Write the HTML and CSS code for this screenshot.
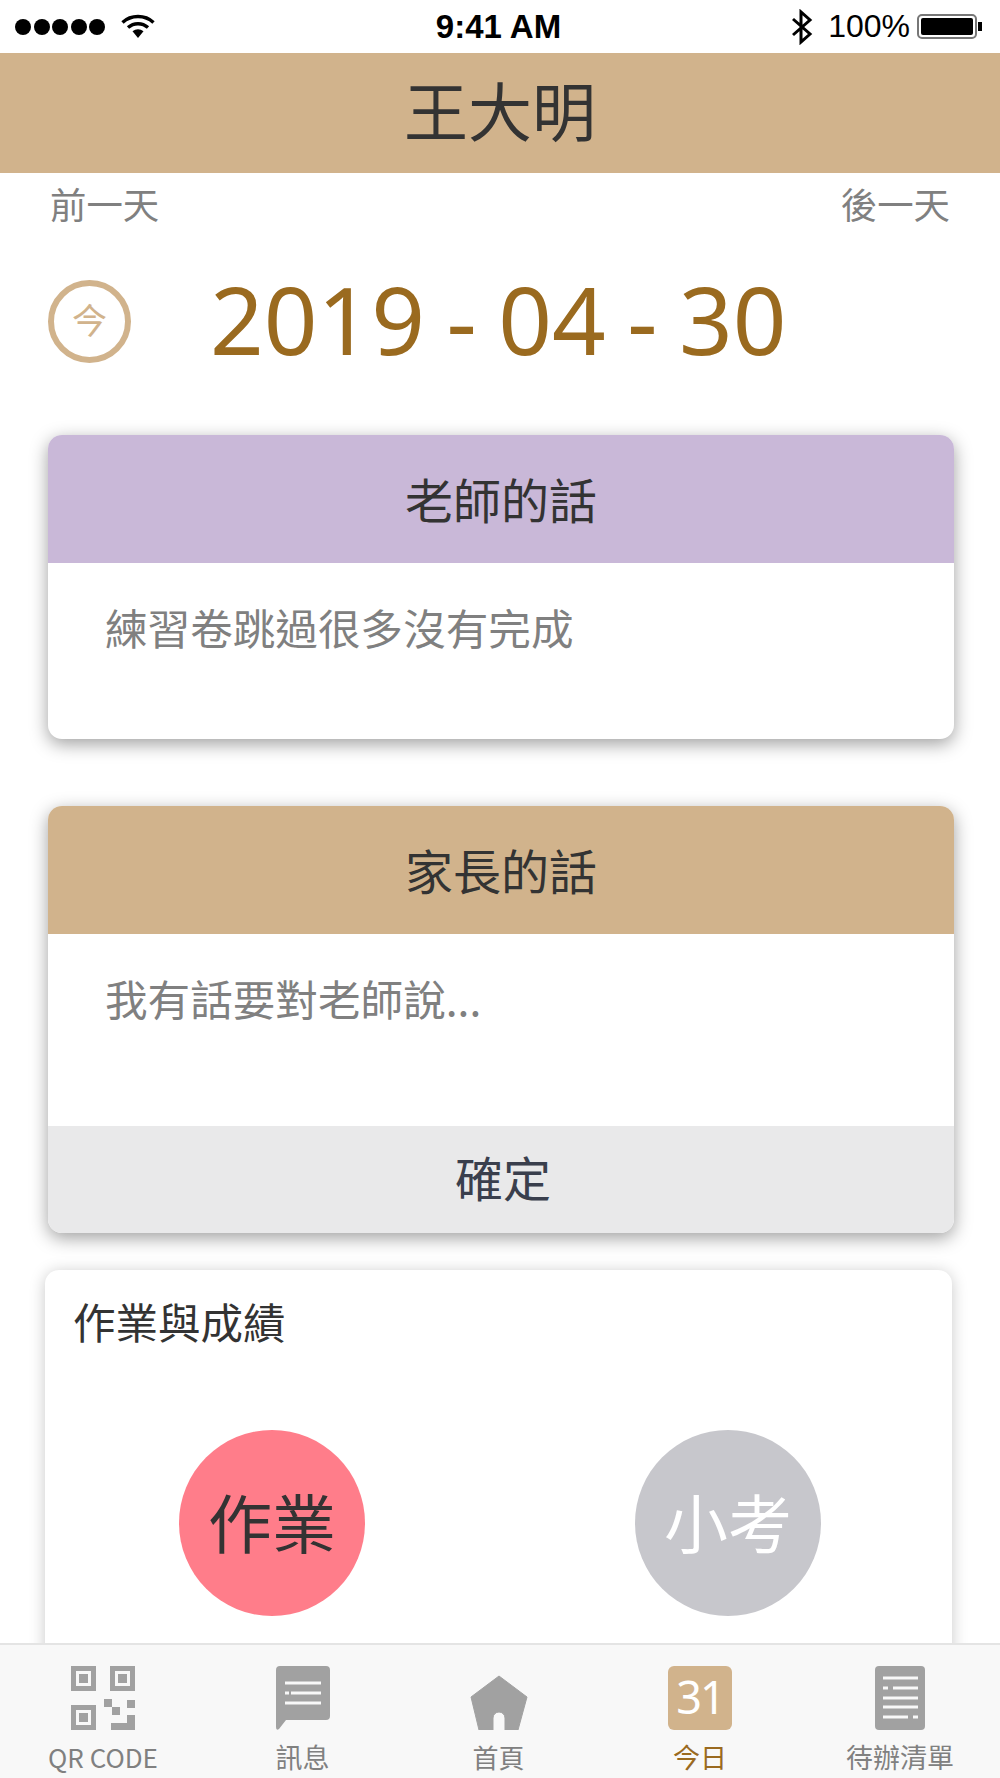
FILE: index.html
```html
<!DOCTYPE html>
<html lang="zh-Hant">
<head>
<meta charset="utf-8">
<title>王大明</title>
<link rel="stylesheet" href="styles.css">
</head>
<body>
<div class="phone">
	<!-- status bar -->
	<div class="statusbar">
		<div class="status-left">
			<span class="dots"><i></i><i></i><i></i><i></i><i></i></span>
			<svg class="wifi" width="34" height="26" viewBox="0 0 34 26">
				<path d="M1.5 8.5C10 0.5 24 0.5 32.5 8.5" fill="none" stroke="#000" stroke-width="3.4"/>
				<path d="M7 13.5C12.8 8.4 21.2 8.4 27 13.5" fill="none" stroke="#000" stroke-width="3.4"/>
				<path d="M11.5 17.3C14.8 14.6 19.2 14.6 22.5 17.3L17 24Z" fill="#000"/>
			</svg>
		</div>
		<div class="status-time">9:41 AM</div>
		<div class="status-right">
			<svg width="22" height="36" viewBox="0 0 22 36">
				<path d="M2 10L19 25L10 33V3L19 11L2 26" fill="none" stroke="#000" stroke-width="3"/>
			</svg>
			<span class="percent">100%</span>
			<span class="battery"><span class="battery-fill"></span></span>
			<span class="battery-tip"></span>
		</div>
	</div>

	<div class="header">王大明</div>

	<div class="content">
		<div class="daynav">
			<span>前一天</span>
			<span>後一天</span>
		</div>
		<div class="daterow">
			<span class="today-btn">今</span>
			<span class="date">2019 - 04 - 30</span>
		</div>

		<div class="card">
			<div class="card-title purple">老師的話</div>
			<div class="card-body teacher">練習卷跳過很多沒有完成</div>
		</div>

		<div class="card parent-card">
			<div class="card-title tan">家長的話</div>
			<div class="card-body parent">我有話要對老師說...</div>
			<div class="confirm">確定</div>
		</div>

		<div class="scores">
			<div class="scores-title">作業與成績</div>
			<div class="circles">
				<div class="circle pink">作業</div>
				<div class="circle grey">小考</div>
			</div>
		</div>
	</div>

	<!-- bottom tabs -->
	<div class="tabbar">
		<div class="tab tab-qr">
			<svg width="64" height="64" viewBox="0 0 64 64" fill="#a1a1a1">
				<path fill-rule="evenodd" d="M0 0H25V25H0ZM5 5V20H20V5Z"/>
				<rect x="8" y="8" width="9" height="9"/>
				<path fill-rule="evenodd" d="M39 0H64V25H39ZM44 5V20H59V5Z"/>
				<rect x="47" y="8" width="9" height="9"/>
				<path fill-rule="evenodd" d="M0 39H25V64H0ZM5 44V59H20V44Z"/>
				<rect x="8" y="47" width="9" height="9"/>
				<rect x="33" y="33" width="8" height="8"/>
				<rect x="41" y="41" width="8" height="8"/>
				<rect x="56" y="34" width="8" height="8"/>
				<path d="M40 57H56V49H64V64H40Z"/>
			</svg>
			<span>QR CODE</span>
		</div>
		<div class="tab tab-msg">
			<svg width="54" height="64" viewBox="0 0 54 64">
				<path d="M4 0H50A4 4 0 0 1 54 4V50A4 4 0 0 1 50 54H10L3 63Q0 65 0 61V4A4 4 0 0 1 4 0Z" fill="#a1a1a1"/>
				<path d="M9 17H45M15 27H45M9 37H45" stroke="#f8f8f8" stroke-width="3" fill="none"/>
				<path d="M9 27H13" stroke="#f8f8f8" stroke-width="3" fill="none"/>
			</svg>
			<span>訊息</span>
		</div>
		<div class="tab tab-home">
			<svg width="58" height="64" viewBox="0 0 58 64">
				<path d="M29 10L57 31L48 64H35V52A6 6 0 0 0 23 52V64H9L1 31Z" fill="#a1a1a1" stroke="#a1a1a1" stroke-width="1" stroke-linejoin="round"/>
			</svg>
			<span>首頁</span>
		</div>
		<div class="tab active">
			<div class="cal">31</div>
			<span>今日</span>
		</div>
		<div class="tab">
			<svg width="50" height="64" viewBox="0 0 50 64">
				<rect width="50" height="64" rx="4" fill="#a1a1a1"/>
				<path d="M8 12H43M18 22H43M8 32H43M8 41H43M8 51H33M38 51H43M8 22H13" stroke="#f8f8f8" stroke-width="3" fill="none"/>
			</svg>
			<span>待辦清單</span>
		</div>
	</div>
</div>
</body>
</html>
```

FILE: styles.css
```css
* {
  box-sizing: border-box;
}

html, body {
  margin: 0;
  padding: 0;
  background: white;
}

body {
  font-family: "Noto Sans CJK TC", "Noto Sans", sans-serif;
}

.phone {
  width: 1000px;
  height: 1778px;
  display: flex;
  flex-direction: column;
  overflow: hidden;
}

/* Status bar */
.statusbar {
  height: 53px;
  flex: none;
  display: grid;
  grid-template-columns: 1fr auto 1fr;
  align-items: center;
  padding: 0 18px 0 15px;
  color: black;
  font-family: "Liberation Sans", sans-serif;
}

.status-left {
  display: flex;
  align-items: center;
  gap: 16px;
}

.dots {
  display: flex;
  gap: 2.5px;
}

.dots i {
  width: 16px;
  height: 16px;
  border-radius: 50%;
  background: black;
}

.status-time {
  font-size: 33px;
  font-weight: bold;
}

.status-right {
  display: flex;
  align-items: center;
  justify-content: flex-end;
}

.percent {
  font-size: 32px;
  margin: 0 7px 0 15px;
}

.battery {
  width: 60px;
  height: 25px;
  border: 2px solid #777;
  border-radius: 5px;
  padding: 2px;
}

.battery-fill {
  display: block;
  height: 100%;
  background: black;
  border-radius: 2px;
}

.battery-tip {
  width: 4px;
  height: 9px;
  margin-left: 1px;
  background: black;
}

/* Header */
.header {
  height: 120px;
  flex: none;
  background: #d1b38c;
  color: #333;
  font-size: 64px;
  line-height: 111px;
  text-align: center;
}

.content {
  flex: 1;
  min-height: 0;
  overflow: hidden;
}

.daynav {
  display: flex;
  justify-content: space-between;
  padding: 0 50px;
  height: 52px;
  line-height: 60px;
  font-size: 36.4px;
  color: #808080;
}

.daterow {
  display: flex;
  align-items: center;
  height: 210px;
  padding: 0 0 0 48px;
}

.today-btn {
  width: 83px;
  height: 83px;
  flex: none;
  margin-top: -18px;
  border: 6px solid #d1b38c;
  border-radius: 50%;
  color: #d1b38c;
  font-size: 35px;
  line-height: 66px;
  text-align: center;
}

.date {
  margin: -22px 0 0 79px;
  font-family: "Noto Sans", sans-serif;
  font-size: 94px;
  line-height: 120px;
  word-spacing: -3px;
  color: #9a6a1f;
  white-space: nowrap;
}

/* Cards */
.card {
  width: 906px;
  margin: 0 0 67px 48px;
  border-radius: 14px;
  overflow: hidden;
  background: white;
  box-shadow: 0 5px 18px rgba(0,0,0,0.38);
}

.card-title {
  height: 128px;
  font-size: 48px;
  line-height: 126px;
  text-align: center;
  color: #333;
}

.purple {
  background: #c9b8d8;
}

.tan {
  background: #d1b38c;
}

.card-body {
  padding: 28px 57px 0;
  font-size: 42.6px;
  line-height: 72px;
  color: #808080;
}

.teacher {
  height: 176px;
}

.parent {
  height: 192px;
}

.parent-card {
  margin-bottom: 37px;
}

.confirm {
  height: 107px;
  padding-left: 4px;
  background: #e9e9ea;
  color: #3a3f4d;
  font-size: 48px;
  line-height: 100px;
  text-align: center;
}

/* Homework and grades */
.scores {
  width: 907px;
  height: 500px;
  margin-left: 45px;
  padding: 21px 28px;
  border-radius: 14px;
  background: white;
  box-shadow: 0 2px 16px rgba(0,0,0,0.22);
}

.scores-title {
  font-size: 42.5px;
  line-height: 60px;
  color: #333;
}

.circles {
  display: flex;
  justify-content: space-between;
  padding: 79px 103px 0 106px;
}

.circle {
  width: 186px;
  height: 186px;
  border-radius: 50%;
  font-size: 64px;
  line-height: 180px;
  text-align: center;
}

.pink {
  background: #ff7d8a;
  color: #333;
}

.grey {
  background: #c7c7cc;
  color: white;
}

/* Tab bar */
.tabbar {
  height: 135px;
  flex: none;
  display: flex;
  background: #f8f8f8;
  border-top: 2px solid #e4e4e4;
}

.tab {
  width: 200px;
  display: flex;
  flex-direction: column;
  align-items: center;
  justify-content: flex-end;
  height: 133px;
  font-size: 27px;
  line-height: 38px;
  color: #808080;
  gap: 8px;
  padding-bottom: 2px;
}

.tab-qr {
  padding-left: 6px;
  font-size: 26px;
}

.tab-msg {
  padding-left: 5px;
}

.tab-home {
  padding-right: 3px;
  font-size: 26px;
}

.tab.active {
  color: #9a6a1f;
}

.cal {
  width: 64px;
  height: 64px;
  border-radius: 6px;
  background: #d1b38c;
  color: white;
  font-family: "Noto Sans", sans-serif;
  font-size: 45px;
  line-height: 62px;
  letter-spacing: -2px;
  text-align: center;
}
```
